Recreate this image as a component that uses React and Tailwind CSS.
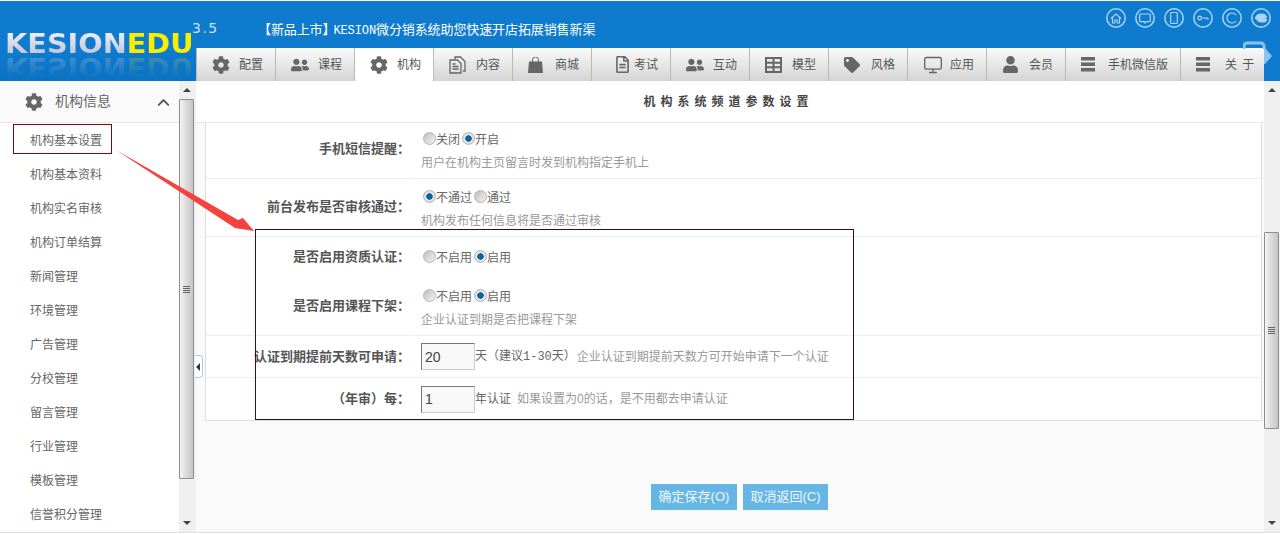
import { Monitor, ChevronUp } from 'lucide-react';
import { FaCog, FaUserFriends, FaRegFileAlt, FaTag, FaUser } from 'react-icons/fa';

const TableIcon = () => (
  <svg width="17" height="16" viewBox="0 0 17 16" fill="none" stroke="#666" strokeWidth="2">
    <rect x="1" y="1" width="15" height="14" />
    <path d="M8.5 1v14M1 5.7h15M1 10.3h15" />
  </svg>
);

const BarsIcon = () => (
  <svg width="14" height="15" viewBox="0 0 14 15" fill="#666">
    <rect width="14" height="3.500" />
    <rect y="5.500" width="14" height="3.500" />
    <rect y="11" width="14" height="3.500" />
  </svg>
);

const BagIcon = () => (
  <svg width="15" height="16" viewBox="0 0 15 16">
    <path d="M4.500 5V3a3 3 0 0 1 6 0v2" fill="none" stroke="#666" />
    <path d="M1 4.500h13L15 16H0z" fill="#666" />
  </svg>
);

const DocsIcon = () => (
  <svg width="17" height="18" viewBox="0 0 17 18" fill="none" stroke="#666" strokeWidth="1.300">
    <path d="M6 3.500V1h5.500l4.500 4.500V15h-2" />
    <path d="M1 4h7.500L12 7.500V17H1z" />
    <path d="M3.500 8h3M3.500 10.500h6M3.500 13h6" />
  </svg>
);

const tabs = [
  { label: '配置', icon: <FaCog size={18} color="#666" />, w: 'w-[79px]' },
  { label: '课程', icon: <FaUserFriends size={18} color="#666" />, w: 'w-[79px]' },
  { label: '机构', icon: <FaCog size={18} color="#666" />, w: 'w-[79px]', active: true },
  { label: '内容', icon: <DocsIcon />, w: 'w-[79px]' },
  { label: '商城', icon: <BagIcon />, w: 'w-[79px]' },
  { label: '考试', icon: <span className="ml-[7px] flex"><FaRegFileAlt size={17} color="#666" /></span>, w: 'w-[79px]' },
  { label: '互动', icon: <FaUserFriends size={18} color="#666" />, w: 'w-[79px]' },
  { label: '模型', icon: <TableIcon />, w: 'w-[79px]' },
  { label: '风格', icon: <FaTag size={16} color="#666" />, w: 'w-[79px]' },
  { label: '应用', icon: <Monitor size={20} color="#666" strokeWidth={1.6} />, w: 'w-[79px]' },
  { label: '会员', icon: <FaUser size={17} color="#666" />, w: 'w-[79px]' },
  { label: '手机微信版', icon: <BarsIcon />, w: 'w-[115px]' },
  { label: '关 于', icon: <BarsIcon />, w: 'w-[84px]', wide: true },
];

const menu = ['机构基本设置', '机构基本资料', '机构实名审核', '机构订单结算', '新闻管理', '环境管理', '广告管理', '分校管理', '留言管理', '行业管理', '模板管理', '信誉积分管理'];

const topIcons = [
  <path key="h" d="M5 10.5 10 6l5 4.5M6.5 9.5V15h2.3v-3h2.4v3h2.3V9.5" />,
  <path key="m" d="M5.5 6h9a.8.8 0 0 1 .8.8v6a.8.8 0 0 1-.8.8H11l-1 1.4-1-1.4H5.500a.8.8 0 0 1-.8-.8v-6a.8.8 0 0 1 .8-.8z" />,
  <path key="p" d="M7.5 4.5h5a.8.8 0 0 1 .8.8v9.4a.8.8 0 0 1-.8.8h-5a.8.8 0 0 1-.8-.8V5.300a.8.8 0 0 1 .8-.8zM9.500 13.800h1" />,
  <path key="k" d="M8.500 10a1.800 1.800 0 1 1-3.600 0 1.800 1.800 0 0 1 3.600 0zM8.500 10h6.500M13 10v1.500M15 10v1.500" />,
  <path key="r" d="M14 7a5 5 0 1 0 0 6" />,
  <path key="b" fill="#a9d5f1" d="M4.500 10.500C5 7.500 7.500 6 10.500 6c2.500 0 4.500 1.300 5 3.500l-3.500.5 3.500 1.500c-.5 2-2.500 2.500-4 2.500-3 0-5-1-6-3.500z" />,
];

function Radio({ on, name }) {
  return (
    <input
      type="radio"
      name={name}
      defaultChecked={on}
      className={`appearance-none w-[13px] h-[13px] rounded-full mb-[3px] ml-[2px] shrink-0 border border-[#b5b5b5] ${on ? 'bg-[radial-gradient(circle,#0a6aa8_0%,#0a5f98_38%,#e8e8e8_44%,#cfcfcf_100%)]' : 'bg-[linear-gradient(135deg,#bdbdbd,#f4f4f4)]'}`}
    />
  );
}

function Choice({ name, a, b, first }) {
  return (
    <div className="flex items-center h-[20px] text-[12px] text-[#666]">
      <Radio name={name} on={first} />
      <span>{a}</span>
      <Radio name={name} on={!first} />
      <span>{b}</span>
    </div>
  );
}

function Row({ label, children, last, h, className = '', labelClass = '' }) {
  return (
    <div className={`grid grid-cols-[209px_1fr] gap-x-px ${h}`}>
      <div className={`flex items-center justify-end pr-[5px] text-[13px] font-bold text-[#555] whitespace-nowrap ${labelClass} ${last ? '' : 'border-b border-[#eee]'}`}>
        {label}：
      </div>
      <div className={`pl-[5px] flex flex-col ${className} ${last ? '' : 'border-b border-[#eee]'}`}>{children}</div>
    </div>
  );
}

function Help({ children }) {
  return <div className="h-[20px] mt-[3px] leading-[20px] text-[12px] text-[#999]">{children}</div>;
}

function Scrollbar({ w, thumb }) {
  return (
    <div className={`${w} shrink-0 bg-[#f0f0f0] flex flex-col`}>
      <div className="w-[15px] h-[18px] flex items-center justify-center">
        <span className="w-0 h-0 border-x-[4px] border-x-transparent border-b-[4px] border-b-[#444]" />
      </div>
      <div className={`${thumb} w-[15px] shrink-0 border border-[#8d8d8d] rounded-[1px] bg-[linear-gradient(90deg,#f4f4f4,#dcdcdc_45%,#c4c4c8)] flex flex-col items-center justify-center gap-[1px]`}>
        <span className="w-[7px] h-px bg-[#666]" />
        <span className="w-[7px] h-px bg-[#666]" />
        <span className="w-[7px] h-px bg-[#666]" />
        <span className="w-[7px] h-px bg-[#666]" />
      </div>
      <div className="flex-1" />
      <div className="w-[15px] h-[18px] flex items-center justify-center">
        <span className="w-0 h-0 border-x-[4px] border-x-transparent border-t-[4px] border-t-[#444]" />
      </div>
    </div>
  );
}

export default function App() {
  return (
    <div className="relative w-[1280px] h-[534px] overflow-hidden bg-white flex flex-col font-['Liberation_Sans','Noto_Sans_CJK_SC',sans-serif]">
      {/* Header */}
      <div className="h-[80px] mt-px shrink-0 bg-[#0e7bcf] flex">
        <div className="w-[196px] shrink-0 pl-[5px] pt-[30px] overflow-hidden bg-[linear-gradient(180deg,#0e7bcf_60%,#0c72c2)]">
          <div className="h-[26px] leading-[26px] text-[26px] font-bold whitespace-nowrap origin-left scale-x-[1.105] font-['DejaVu_Sans',sans-serif]">
            <span className="bg-[linear-gradient(180deg,#f4f4fa,#b9bccf)] bg-clip-text text-transparent">KESION</span>
            <span className="text-[#f7ee00]">EDU</span>
          </div>
          <div className="-mt-[3px] [mask-image:linear-gradient(180deg,black,transparent_90%)]">
            <div className="h-[26px] leading-[26px] text-[26px] font-bold whitespace-nowrap origin-left scale-x-[1.105] -scale-y-100 opacity-30 font-['DejaVu_Sans',sans-serif]">
              <span className="text-[#d5d8ea]">KESION</span>
              <span className="text-[#c9d24a]">EDU</span>
            </div>
          </div>
        </div>
        <div className="flex-1 flex flex-col">
          <div className="h-[47px] shrink-0 flex">
            <span className="-ml-[4px] w-[66px] pt-[19px] text-[14px] leading-[16px] tracking-[1.5px] text-[#c9e0f3] font-['DejaVu_Sans',sans-serif]">3.5</span>
            <div className="pt-[19px] leading-[20px] text-[13px] text-white whitespace-nowrap tracking-[-0.1px]">
              【新品上市】<span className="-ml-[2px] font-['Liberation_Mono',monospace] text-[12px]">KESION</span>微分销系统助您快速开店拓展销售新渠
            </div>
            <div className="ml-auto pr-[9px] pt-[7px] flex gap-[9px] self-start">
              {topIcons.map((ic, i) => (
                <svg key={i} width="20" height="20" viewBox="0 0 20 20" fill="none" stroke="#a9d5f1" strokeWidth="1.2">
                  <circle cx="10" cy="10" r="9.200" strokeWidth="1.500" />
                  {ic}
                </svg>
              ))}
            </div>
          </div>
          <div className="h-[33px] flex">
            {tabs.map((t) => (
              <div
                key={t.label}
                className={`${t.w} shrink-0 flex items-center pl-[15px] border-l border-[#b9b9b9] ${t.active ? 'bg-white' : 'bg-[linear-gradient(180deg,#fafafa,#d4d4d4)]'}`}
              >
                <span className={`${t.wide ? 'w-[29px]' : 'w-[27px]'} shrink-0 flex items-center`}>{t.icon}</span>
                <span className={`text-[12px] text-[#555] whitespace-nowrap ${t.wide ? 'tracking-[1px]' : ''}`}>{t.label}</span>
              </div>
            ))}
          </div>
        </div>
      </div>

      {/* Body */}
      <div className="flex h-[451px] shrink-0">
        <div className="w-[179px] shrink-0 overflow-hidden">
          <div className="h-[42px] flex items-center pl-[25px] pr-[6px] bg-[#fafafa] border-b border-[#e8e8e8]">
            <FaCog size={18} color="#666" />
            <span className="ml-[12px] text-[14px] text-[#666]">机构信息</span>
            <ChevronUp size={19} color="#555" strokeWidth={2.4} className="ml-auto mt-[2px]" />
          </div>
          {menu.map((m) => (
            <div key={m} className="h-[34px] pt-[2px] flex items-center pl-[30px] text-[12px] text-[#666]">{m}</div>
          ))}
        </div>
        <Scrollbar w="w-[17px]" thumb="h-[380px]" />

        <div className="flex-1 flex flex-col bg-[#fafafa] min-w-0">
          <div className="h-[42px] shrink-0 bg-white border-b border-[#e8e8e8] flex items-center justify-center pr-[3px] text-[12px] font-bold tracking-[5px] text-[#444]">
            机构系统频道参数设置
          </div>
          <div className="ml-[9px] mr-[2px] bg-white border-x border-b border-[#ddd]">
            <Row label="手机短信提醒" h="h-[56px]" className="pt-[7px]" labelClass="pb-[3px]">
              <Choice name="sms" a="关闭" b="开启" />
              <Help>用户在机构主页留言时发到机构指定手机上</Help>
            </Row>
            <Row label="前台发布是否审核通过" h="h-[58px]" className="pt-[9px]" labelClass="pb-[2px]">
              <Choice name="audit" a="不通过" b="通过" first />
              <Help>机构发布任何信息将是否通过审核</Help>
            </Row>
            <Row label="是否启用资质认证" h="h-[39px]" last className="justify-center pt-[2px]">
              <Choice name="cert" a="不启用" b="启用" />
            </Row>
            <Row label="是否启用课程下架" h="h-[60px]" className="pt-[11px]">
              <Choice name="down" a="不启用" b="启用" />
              <Help>企业认证到期是否把课程下架</Help>
            </Row>
            <Row label="认证到期提前天数可申请" h="h-[42px]" className="justify-center">
              <div className="flex items-center text-[12px] text-[#666] whitespace-nowrap">
                <input readOnly defaultValue="20" className="w-[54px] h-[27px] pl-[3px] text-[14px] text-[#444] bg-[#f8f8f8] border border-[#ccc] border-t-[#777] border-l-[#777] outline-none" />
                <span>天（建议<span className="font-['Liberation_Mono',monospace]">1-30</span>天）</span>
                <span className="ml-[1px] text-[#999]">企业认证到期提前天数方可开始申请下一个认证</span>
              </div>
            </Row>
            <Row label="（年审）每" h="h-[42px]" last className="justify-center">
              <div className="flex items-center text-[12px] text-[#666] whitespace-nowrap">
                <input readOnly defaultValue="1" className="w-[54px] h-[27px] pl-[3px] text-[14px] text-[#444] bg-[#f8f8f8] border border-[#ccc] border-t-[#777] border-l-[#777] outline-none" />
                <span>年认证</span>
                <span className="ml-[6px] text-[#999]">如果设置为0的话，是不用都去申请认证</span>
              </div>
            </Row>
          </div>
          <div className="mt-[63px] ml-[455px] flex gap-[6px] text-[13px] text-[#eef8ff]">
            <button className="w-[86px] h-[26px] bg-[#65b5e5]">确定保存(O)</button>
            <button className="w-[85px] h-[26px] bg-[#65b5e5]">取消返回(C)</button>
          </div>
        </div>
        <Scrollbar w="w-[16px]" thumb="h-[197px] mt-[133px]" />
      </div>
      <div className="flex-1 border-t border-[#ddd]" />

      {/* Annotations over the page */}
      <div className="absolute left-[13px] top-[124px] w-[99px] h-[30px] border border-[#7b0a0a] pointer-events-none" />
      <div className="absolute left-[255px] top-[229px] w-[599px] h-[191px] border border-[#4a0808] pointer-events-none" />
      <svg className="absolute left-0 top-0 pointer-events-none" width="300" height="260">
        <polygon points="116,150 238,220 243,218 254,231 235,228 232,226" fill="#f5423f" />
      </svg>
      {/* collapse handle */}
      <div className="absolute left-[195px] top-[355px] w-[8px] h-[23px] bg-white border border-l-0 border-[#a9c9ee] rounded-r-[4px] flex items-center">
        <span className="w-0 h-0 border-y-[4px] border-y-transparent border-r-[4px] border-r-[#333] ml-[1px]" />
      </div>
      {/* exit icon partly behind the tabs */}
      <svg className="absolute left-[1243px] top-[41px] pointer-events-none" width="30" height="26">
        <path d="M1 8V5a3 3 0 0 1 3-3h14a3 3 0 0 1 3 3v3" fill="none" stroke="#8cc4ec" strokeWidth="3" />
        <path d="M21 7h1l7 8-7 8h-1z" fill="#8cc4ec" />
      </svg>
    </div>
  );
}
